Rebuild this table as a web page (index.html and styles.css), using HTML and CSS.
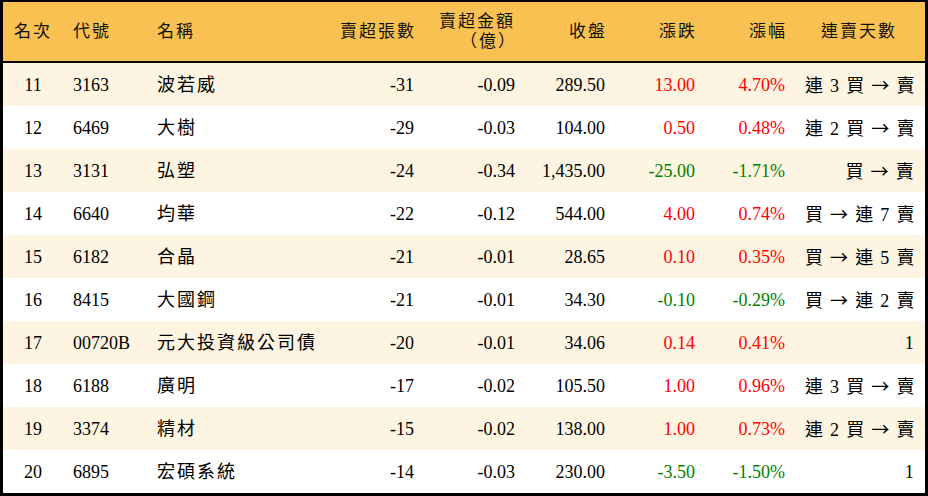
FILE: index.html
```html
<!DOCTYPE html>
<html lang="zh-Hant">
<head>
<meta charset="utf-8">
<title>賣超排行</title>
<link rel="stylesheet" href="styles.css">
</head>
<body>
<div class="board">
<table class="rank">
<colgroup>
<col class="c-rank"><col class="c-code"><col class="c-name"><col class="c-vol"><col class="c-amt"><col class="c-close"><col class="c-chg"><col class="c-pct"><col class="c-streak">
</colgroup>
<thead>
<tr>
<th class="ctr"><span class="h">名次</span></th>
<th class="lft"><span class="h">代號</span></th>
<th class="lft"><span class="h">名稱</span></th>
<th class="rgt"><span class="h">賣超張數</span></th>
<th class="rgt two"><span class="h">賣超金額<br>（億）</span></th>
<th class="rgt"><span class="h">收盤</span></th>
<th class="rgt"><span class="h">漲跌</span></th>
<th class="rgt"><span class="h">漲幅</span></th>
<th class="ctr"><span class="h">連賣天數</span></th>
</tr>
</thead>
<tbody>
<tr><td class="ctr">11</td><td class="lft">3163</td><td class="lft name">波若威</td><td class="rgt">-31</td><td class="rgt">-0.09</td><td class="rgt">289.50</td><td class="rgt up">13.00</td><td class="rgt up">4.70%</td><td class="rgt streak">連 3 買 <span class="arr">→</span> 賣</td></tr>
<tr><td class="ctr">12</td><td class="lft">6469</td><td class="lft name">大樹</td><td class="rgt">-29</td><td class="rgt">-0.03</td><td class="rgt">104.00</td><td class="rgt up">0.50</td><td class="rgt up">0.48%</td><td class="rgt streak">連 2 買 <span class="arr">→</span> 賣</td></tr>
<tr><td class="ctr">13</td><td class="lft">3131</td><td class="lft name">弘塑</td><td class="rgt">-24</td><td class="rgt">-0.34</td><td class="rgt">1,435.00</td><td class="rgt dn">-25.00</td><td class="rgt dn">-1.71%</td><td class="rgt streak">買 <span class="arr">→</span> 賣</td></tr>
<tr><td class="ctr">14</td><td class="lft">6640</td><td class="lft name">均華</td><td class="rgt">-22</td><td class="rgt">-0.12</td><td class="rgt">544.00</td><td class="rgt up">4.00</td><td class="rgt up">0.74%</td><td class="rgt streak">買 <span class="arr">→</span> 連 7 賣</td></tr>
<tr><td class="ctr">15</td><td class="lft">6182</td><td class="lft name">合晶</td><td class="rgt">-21</td><td class="rgt">-0.01</td><td class="rgt">28.65</td><td class="rgt up">0.10</td><td class="rgt up">0.35%</td><td class="rgt streak">買 <span class="arr">→</span> 連 5 賣</td></tr>
<tr><td class="ctr">16</td><td class="lft">8415</td><td class="lft name">大國鋼</td><td class="rgt">-21</td><td class="rgt">-0.01</td><td class="rgt">34.30</td><td class="rgt dn">-0.10</td><td class="rgt dn">-0.29%</td><td class="rgt streak">買 <span class="arr">→</span> 連 2 賣</td></tr>
<tr><td class="ctr">17</td><td class="lft">00720B</td><td class="lft name">元大投資級公司債</td><td class="rgt">-20</td><td class="rgt">-0.01</td><td class="rgt">34.06</td><td class="rgt up">0.14</td><td class="rgt up">0.41%</td><td class="rgt streak">1</td></tr>
<tr><td class="ctr">18</td><td class="lft">6188</td><td class="lft name">廣明</td><td class="rgt">-17</td><td class="rgt">-0.02</td><td class="rgt">105.50</td><td class="rgt up">1.00</td><td class="rgt up">0.96%</td><td class="rgt streak">連 3 買 <span class="arr">→</span> 賣</td></tr>
<tr><td class="ctr">19</td><td class="lft">3374</td><td class="lft name">精材</td><td class="rgt">-15</td><td class="rgt">-0.02</td><td class="rgt">138.00</td><td class="rgt up">1.00</td><td class="rgt up">0.73%</td><td class="rgt streak">連 2 買 <span class="arr">→</span> 賣</td></tr>
<tr><td class="ctr">20</td><td class="lft">6895</td><td class="lft name">宏碩系統</td><td class="rgt">-14</td><td class="rgt">-0.03</td><td class="rgt">230.00</td><td class="rgt dn">-3.50</td><td class="rgt dn">-1.50%</td><td class="rgt streak">1</td></tr>
</tbody>
</table>
</div>
</body>
</html>
```

FILE: styles.css
```css
html, body {
  margin: 0;
  padding: 0;
  background: #ffffff;
}

.board {
  width: 928px;
  height: 496px;
  box-sizing: border-box;
  border: 3px solid #000;
  border-top-width: 2px;
  overflow: hidden;
}

.rank {
  width: 922px;
  table-layout: fixed;
  border-collapse: separate;
  border-spacing: 0;
  font-family: "Liberation Serif", "Noto Sans CJK TC", serif;
  font-size: 18px;
  color: #000;
}

.c-rank { width: 60px; }
.c-code { width: 84px; }
.c-name { width: 170px; }
.c-vol { width: 107px; }
.c-amt { width: 101px; }
.c-close { width: 90px; }
.c-chg { width: 90px; }
.c-pct { width: 90px; }
.c-streak { width: 130px; }

.rank thead tr {
  height: 61px;
  background: #f9c152;
}

.rank th {
  font-weight: normal;
  font-size: 17px;
  line-height: 20px;
  letter-spacing: 2px;
  border-bottom: 2px solid #000;
  padding: 0 10px;
  vertical-align: middle;
  white-space: nowrap;
  color: #111;
}

.rank th.rgt .h {
  margin-right: -2px;
}

.rank th.two {
  padding-top: 1px;
}

.rank tbody tr {
  height: 43px;
}

.rank tbody tr:nth-child(odd) {
  background: #fdf5e1;
}

.rank td {
  padding: 0 10px;
  vertical-align: middle;
  white-space: nowrap;
  line-height: 22px;
}

.ctr { text-align: center; }
.lft { text-align: left; }
.rgt { text-align: right; }

.rank td.name {
  letter-spacing: 2px;
}

.rank td.streak {
  padding-right: 10px;
  letter-spacing: 1.3px;
}

.arr {
  font-family: "Noto Sans CJK TC", sans-serif;
}

.rank th:last-child {
  padding-right: 12px;
}

.up { color: #ff0000; }
.dn { color: #008000; }
```
